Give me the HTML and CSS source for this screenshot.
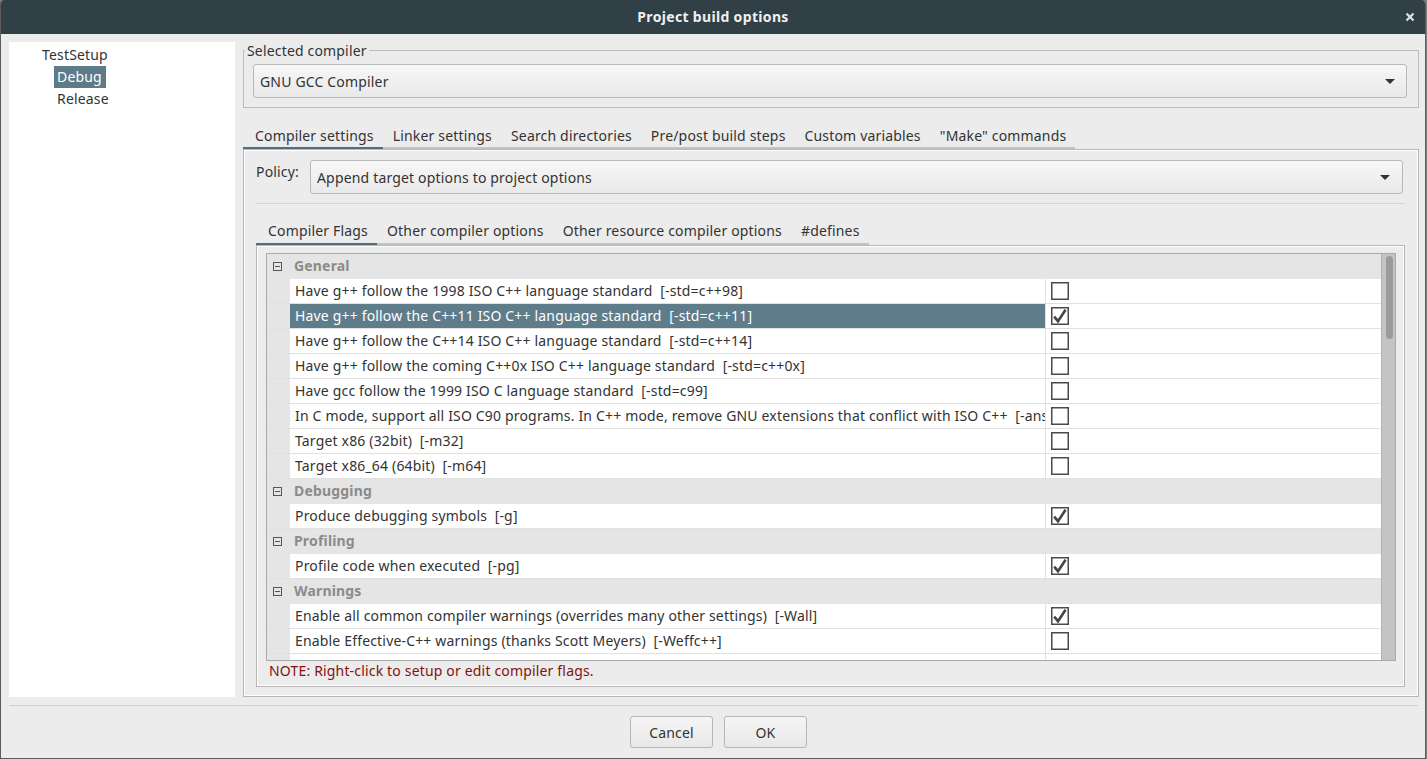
FILE: index.html
```html
<!DOCTYPE html>
<html>
<head>
<meta charset="utf-8">
<link rel="stylesheet" href="styles.css">
</head>
<body>
<div class="window">
  <div class="titlebar">
    <span class="title">Project build options</span>
    <svg class="close" width="10" height="10" viewBox="0 0 10 10"><path d="M1.5 1.5 L8.5 8.5 M8.5 1.5 L1.5 8.5" stroke="#dfe3e5" stroke-width="2.2" fill="none"/></svg>
  </div>
  <div class="content">
    <div class="main">
      <div class="tree">
        <div class="node root">TestSetup</div>
        <div class="node child"><span class="sel">Debug</span></div>
        <div class="node child"><span class="plain">Release</span></div>
      </div>
      <div class="right">
        <fieldset class="group">
          <legend>Selected compiler</legend>
          <div class="combo"><span class="combo-text">GNU GCC Compiler</span><svg class="arrow" width="10" height="5" viewBox="0 0 10 5"><path d="M0 0 H10 L5 5 Z" fill="#333"/></svg></div>
        </fieldset>
        <div class="tabs outer-tabs">
          <div class="tab active first">Compiler settings</div>
          <div class="tab">Linker settings</div>
          <div class="tab">Search directories</div>
          <div class="tab">Pre/post build steps</div>
          <div class="tab">Custom variables</div>
          <div class="tab">"Make" commands</div>
        </div>
        <div class="pane">
          <div class="policy">
            <span class="plabel">Policy:</span>
            <div class="combo combo-policy"><span class="combo-text">Append target options to project options</span><svg class="arrow" width="10" height="5" viewBox="0 0 10 5"><path d="M0 0 H10 L5 5 Z" fill="#333"/></svg></div>
          </div>
          <div class="sep"></div>
          <div class="tabs inner-tabs">
            <div class="tab active first">Compiler Flags</div>
            <div class="tab">Other compiler options</div>
            <div class="tab">Other resource compiler options</div>
            <div class="tab">#defines</div>
          </div>
          <div class="pane inner-pane">
            <div class="grid">
              <div class="rows">
                <div class="row header"><span class="gutter"><svg width="9" height="9" viewBox="0 0 9 9"><rect x="0.5" y="0.5" width="8" height="8" fill="none" stroke="#555"/><path d="M2 4.5 H7" stroke="#555"/></svg></span><span class="htext">General</span></div>
                <div class="row"><span class="gutter"></span><span class="cell">Have g++ follow the 1998 ISO C++ language standard&nbsp; [-std=c++98]</span><span class="chk"><svg class="box" width="18" height="18" viewBox="0 0 18 18"><rect x="0.75" y="0.75" width="16.5" height="16.5" fill="#fff" stroke="#4a4a4a" stroke-width="1.5"/></svg></span></div>
                <div class="row selected"><span class="gutter"></span><span class="cell">Have g++ follow the C++11 ISO C++ language standard&nbsp; [-std=c++11]</span><span class="chk"><svg class="box" width="18" height="18" viewBox="0 0 18 18"><rect x="0.75" y="0.75" width="16.5" height="16.5" fill="#fff" stroke="#4a4a4a" stroke-width="1.5"/><path d="M3.2 9.6 L7 14.2 L14.6 2.8" fill="none" stroke="#454545" stroke-width="2.6"/></svg></span></div>
                <div class="row"><span class="gutter"></span><span class="cell">Have g++ follow the C++14 ISO C++ language standard&nbsp; [-std=c++14]</span><span class="chk"><svg class="box" width="18" height="18" viewBox="0 0 18 18"><rect x="0.75" y="0.75" width="16.5" height="16.5" fill="#fff" stroke="#4a4a4a" stroke-width="1.5"/></svg></span></div>
                <div class="row"><span class="gutter"></span><span class="cell">Have g++ follow the coming C++0x ISO C++ language standard&nbsp; [-std=c++0x]</span><span class="chk"><svg class="box" width="18" height="18" viewBox="0 0 18 18"><rect x="0.75" y="0.75" width="16.5" height="16.5" fill="#fff" stroke="#4a4a4a" stroke-width="1.5"/></svg></span></div>
                <div class="row"><span class="gutter"></span><span class="cell">Have gcc follow the 1999 ISO C language standard&nbsp; [-std=c99]</span><span class="chk"><svg class="box" width="18" height="18" viewBox="0 0 18 18"><rect x="0.75" y="0.75" width="16.5" height="16.5" fill="#fff" stroke="#4a4a4a" stroke-width="1.5"/></svg></span></div>
                <div class="row"><span class="gutter"></span><span class="cell">In C mode, support all ISO C90 programs. In C++ mode, remove GNU extensions that conflict with ISO C++&nbsp; [-ansi]</span><span class="chk"><svg class="box" width="18" height="18" viewBox="0 0 18 18"><rect x="0.75" y="0.75" width="16.5" height="16.5" fill="#fff" stroke="#4a4a4a" stroke-width="1.5"/></svg></span></div>
                <div class="row"><span class="gutter"></span><span class="cell">Target x86 (32bit)&nbsp; [-m32]</span><span class="chk"><svg class="box" width="18" height="18" viewBox="0 0 18 18"><rect x="0.75" y="0.75" width="16.5" height="16.5" fill="#fff" stroke="#4a4a4a" stroke-width="1.5"/></svg></span></div>
                <div class="row"><span class="gutter"></span><span class="cell">Target x86_64 (64bit)&nbsp; [-m64]</span><span class="chk"><svg class="box" width="18" height="18" viewBox="0 0 18 18"><rect x="0.75" y="0.75" width="16.5" height="16.5" fill="#fff" stroke="#4a4a4a" stroke-width="1.5"/></svg></span></div>
                <div class="row header"><span class="gutter"><svg width="9" height="9" viewBox="0 0 9 9"><rect x="0.5" y="0.5" width="8" height="8" fill="none" stroke="#555"/><path d="M2 4.5 H7" stroke="#555"/></svg></span><span class="htext">Debugging</span></div>
                <div class="row"><span class="gutter"></span><span class="cell">Produce debugging symbols&nbsp; [-g]</span><span class="chk"><svg class="box" width="18" height="18" viewBox="0 0 18 18"><rect x="0.75" y="0.75" width="16.5" height="16.5" fill="#fff" stroke="#4a4a4a" stroke-width="1.5"/><path d="M3.2 9.6 L7 14.2 L14.6 2.8" fill="none" stroke="#454545" stroke-width="2.6"/></svg></span></div>
                <div class="row header"><span class="gutter"><svg width="9" height="9" viewBox="0 0 9 9"><rect x="0.5" y="0.5" width="8" height="8" fill="none" stroke="#555"/><path d="M2 4.5 H7" stroke="#555"/></svg></span><span class="htext">Profiling</span></div>
                <div class="row"><span class="gutter"></span><span class="cell">Profile code when executed&nbsp; [-pg]</span><span class="chk"><svg class="box" width="18" height="18" viewBox="0 0 18 18"><rect x="0.75" y="0.75" width="16.5" height="16.5" fill="#fff" stroke="#4a4a4a" stroke-width="1.5"/><path d="M3.2 9.6 L7 14.2 L14.6 2.8" fill="none" stroke="#454545" stroke-width="2.6"/></svg></span></div>
                <div class="row header"><span class="gutter"><svg width="9" height="9" viewBox="0 0 9 9"><rect x="0.5" y="0.5" width="8" height="8" fill="none" stroke="#555"/><path d="M2 4.5 H7" stroke="#555"/></svg></span><span class="htext">Warnings</span></div>
                <div class="row"><span class="gutter"></span><span class="cell">Enable all common compiler warnings (overrides many other settings)&nbsp; [-Wall]</span><span class="chk"><svg class="box" width="18" height="18" viewBox="0 0 18 18"><rect x="0.75" y="0.75" width="16.5" height="16.5" fill="#fff" stroke="#4a4a4a" stroke-width="1.5"/><path d="M3.2 9.6 L7 14.2 L14.6 2.8" fill="none" stroke="#454545" stroke-width="2.6"/></svg></span></div>
                <div class="row"><span class="gutter"></span><span class="cell">Enable Effective-C++ warnings (thanks Scott Meyers)&nbsp; [-Weffc++]</span><span class="chk"><svg class="box" width="18" height="18" viewBox="0 0 18 18"><rect x="0.75" y="0.75" width="16.5" height="16.5" fill="#fff" stroke="#4a4a4a" stroke-width="1.5"/></svg></span></div>
                <div class="row"><span class="gutter"></span><span class="cell"></span><span class="chk"></span></div>
              </div>
              <div class="scrollbar"><div class="thumb"></div></div>
            </div>
            <div class="note">NOTE: Right-click to setup or edit compiler flags.</div>
          </div>
        </div>
      </div>
    </div>
    <div class="hsep"></div>
    <div class="buttons">
      <button class="btn">Cancel</button>
      <button class="btn">OK</button>
    </div>
  </div>
</div>
</body>
</html>
```

FILE: styles.css
```css
* { box-sizing: border-box; }
html, body { margin: 0; padding: 0; }
body {
  width: 1427px;
  height: 759px;
  background: #7d7f80;
  font-family: "Noto Sans", "Open Sans", "DejaVu Sans", sans-serif;
  font-size: 14px;
  letter-spacing: 0.17px;
  color: #333;
  overflow: hidden;
}
.window {
  width: 1426px;
  height: 759px;
  background: #ececec;
  border-left: 1px solid #5c5c5c;
  border-right: 1px solid #5c5c5c;
  border-bottom: 1px solid #5c5c5c;
  border-radius: 4px 4px 0 0;
  display: flex;
  flex-direction: column;
  overflow: hidden;
}
.titlebar {
  height: 34px;
  flex: none;
  background: #313f47;
  display: flex;
  align-items: center;
  justify-content: center;
  position: relative;
}
.title {
  color: #eef0f1;
  font-weight: bold;
  font-size: 14px;
  letter-spacing: 0.33px;
  padding-bottom: 1px;
}
.close {
  position: absolute;
  right: 10px;
  top: 12px;
}
.content {
  flex: 1;
  display: flex;
  flex-direction: column;
  padding: 8px 6px 0 8px;
}
.main {
  height: 655px;
  display: flex;
  gap: 8px;
}
.tree {
  width: 226px;
  flex: none;
  background: #fff;
  padding-top: 2px;
}
.node {
  height: 22px;
  line-height: 22px;
  white-space: nowrap;
}
.root { padding-left: 33px; }
.child { padding-left: 45px; }
.sel {
  display: inline-block;
  background: #5e7b89;
  color: #fff;
  padding: 0 4px 0 3px;
  height: 22px;
}
.plain { padding-left: 3px; }
.right {
  flex: 1;
  display: flex;
  flex-direction: column;
  min-width: 0;
}
.group {
  margin: 0;
  border: 1px solid #bcbcbc;
  padding: 5px 11px 9px 9px;
  min-width: 0;
}
.group legend {
  padding: 0 2px;
  margin-left: -8px;
  line-height: 17px;
  color: #333;
}
.combo {
  height: 34px;
  border: 1px solid #b9b9b9;
  border-radius: 3px;
  background: linear-gradient(#f7f7f7, #e9e9e9);
  display: flex;
  align-items: center;
  padding: 0 11px 0 6px;
}
.combo-text { flex: 1; white-space: nowrap; }
.arrow { flex: none; }
.tabs {
  display: flex;
  height: 26px;
  flex: none;
}
.outer-tabs { margin-top: 15px; }
.tab {
  height: 26px;
  line-height: 25px;
  padding: 0 9px;
  border-bottom: 2px solid #c3c3c3;
  white-space: nowrap;
}
.outer-tabs .tab { padding: 0 9px 0 10px; }
.outer-tabs .tab.first { padding-left: 12px; }
.tab.first { padding-left: 12px; }
.tab.active { border-bottom-color: #566e7a; }
.pane {
  flex: 1;
  border: 1px solid #b6b6b6;
  box-shadow: inset 1px 1px 0 #fff, inset -1px -1px 0 #fff;
  display: flex;
  flex-direction: column;
  padding: 10px 13px 9px 12px;
  min-height: 0;
}
.policy {
  display: flex;
  align-items: flex-start;
  gap: 10px;
  margin-right: 2px;
}
.plabel {
  line-height: 17px;
  padding-top: 3px;
  width: 44px;
  flex: none;
}
.combo-policy { flex: 1; padding-right: 12px; }
.sep {
  height: 1px;
  background: #d6d6d6;
  margin-top: 9px;
  flex: none;
}
.inner-tabs { margin-top: 15px; }
.inner-tabs .tab { line-height: 24px; padding: 0 9px 0 10px; }
.inner-tabs .tab.first { padding-left: 12px; }
.inner-pane {
  padding: 7px 8px 0 9px;
}
.grid {
  height: 408px;
  flex: none;
  border: 1px solid #a9a9a9;
  display: flex;
  background: #fff;
}
.rows {
  flex: 1;
  overflow: hidden;
  min-width: 0;
}
.row {
  height: 25px;
  border-bottom: 1px solid #e1e1e1;
  display: flex;
  align-items: stretch;
  background: #fff;
}
.row.header {
  background: #e5e5e5;
  border-bottom-color: #e5e5e5;
}
.gutter {
  width: 23px;
  flex: none;
  background: #e5e5e5;
  display: flex;
  align-items: center;
  padding-left: 6px;
}
.htext {
  font-weight: bold;
  color: #8b8b8b;
  line-height: 24px;
  padding-left: 4px;
}
.cell {
  width: 756px;
  flex: none;
  line-height: 24px;
  padding-left: 5px;
  white-space: nowrap;
  overflow: hidden;
  border-right: 1px solid #e1e1e1;
}
.row.selected .cell {
  background: #5f7c8a;
  color: #fff;
}
.chk {
  flex: 1;
  display: flex;
  align-items: center;
  padding-left: 5px;
}
.box { display: block; }
.scrollbar {
  width: 14px;
  flex: none;
  background: #c4c4c4;
  border-left: 1px solid #b3b3b3;
  padding: 2px 2px 0 4px;
}
.thumb {
  height: 83px;
  width: 7px;
  border-radius: 4px;
  background: #9b9b9b;
}
.note {
  color: #861010;
  line-height: 17px;
  margin-top: 1px;
  padding-left: 3px;
}
.hsep {
  height: 1px;
  background: #cfcfcf;
  margin-top: 8px;
  margin-right: 1px;
  flex: none;
}
.buttons {
  display: flex;
  justify-content: center;
  gap: 11px;
  margin-top: 10px;
  padding-left: 9px;
}
.btn {
  width: 83px;
  height: 32px;
  border: 1px solid #b6b6b6;
  border-radius: 3px;
  background: linear-gradient(#f5f5f5, #e8e8e8);
  font-family: "Noto Sans", "Open Sans", "DejaVu Sans", sans-serif;
  font-size: 14px;
  letter-spacing: 0.17px;
  color: #333;
  padding: 0;
}
```
